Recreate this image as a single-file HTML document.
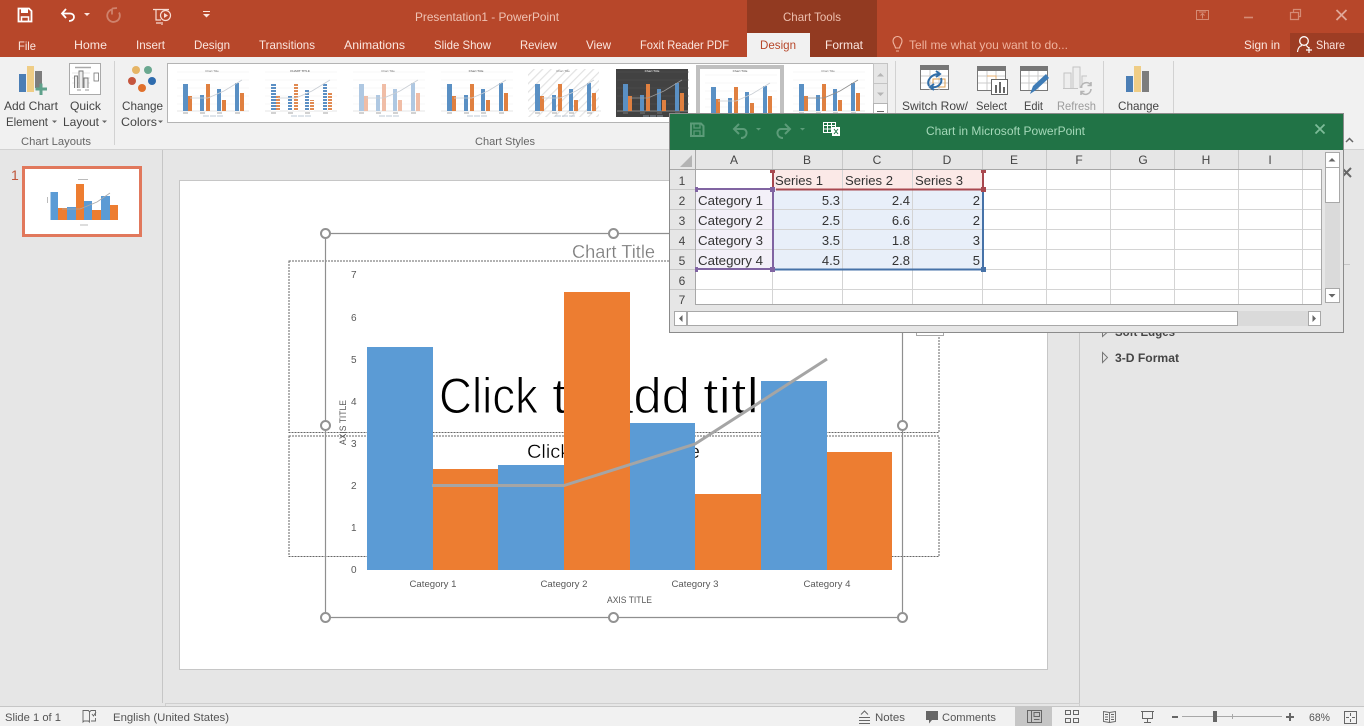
<!DOCTYPE html>
<html lang="en"><head><meta charset="utf-8"><title>Presentation1 - PowerPoint</title>
<style>
html,body{margin:0;padding:0;background:#e6e6e6;overflow:hidden}
svg{display:block;position:absolute;left:0;top:0}
text{font-family:"Liberation Sans",sans-serif;font-size:12px;fill:#444}
.tab{fill:#fbe6df;font-size:12px}
.rb{fill:#444;font-size:12px}
.gr{fill:#666;font-size:11px}
.cell{fill:#333;font-size:13px}
.hd{fill:#444;font-size:12px;text-anchor:middle}
.st{fill:#555;font-size:11px}
.ax{fill:#595959;font-size:10px}
.cat{fill:#595959;font-size:9.5px;text-anchor:middle}
.tiny{font-size:3px;fill:#777;text-anchor:middle}
.big{font-size:50px;fill:#000;stroke:#fff;stroke-width:1.1px}
.soft{filter:blur(.3px)}
</style></head><body>
<svg width="1364" height="726" viewBox="0 0 1364 726" xmlns="http://www.w3.org/2000/svg">
<defs>
<pattern id="sb" width="100" height="3" patternUnits="userSpaceOnUse"><rect width="100" height="2" fill="#5b8fc4"/><rect y="2" width="100" height="1" fill="#fff"/></pattern>
<pattern id="so" width="100" height="3" patternUnits="userSpaceOnUse"><rect width="100" height="2" fill="#e08a52"/><rect y="2" width="100" height="1" fill="#fff"/></pattern>
<pattern id="hatch" width="6" height="6" patternUnits="userSpaceOnUse" patternTransform="rotate(45)"><rect width="6" height="6" fill="#fff"/><rect width="1.2" height="6" fill="#e2e2e2"/></pattern>
<g id="th">
<path d="M-6 72H66M-6 80H66M-6 88H66M-6 96H66M-6 104H66" stroke="var(--g,#f0f0f0)" stroke-width=".6"/>
<path d="M-6 111H66" stroke="#ccc" stroke-width=".6"/>
<path d="M0 84h5v27H0zM17 95h4v16h-4zM34 89h4v22h-4zM52 83h4v28h-4z" fill="var(--b,#5a90c4)"/>
<path d="M5 96h4v15H5zM23 84h4v27h-4zM39 100h4v11h-4zM57 93h4v18h-4z" fill="var(--o,#e08040)"/>
<path d="M7 98H25L41 91 59 80" fill="none" stroke="var(--l,#c9ced4)" stroke-width=".8"/>
<path d="M0 113h5M17 113h5M34 113h5M52 113h5" stroke="#888" stroke-width=".8"/>
<path d="M20 116h6M27 116h6M34 116h6" stroke="#a9b6c7" stroke-width=".8"/>
</g>
</defs>

<!-- base -->
<rect width="1364" height="726" fill="#e6e6e6"/>
<path d="M162.500 150V703" stroke="#c6c6c6"/>
<path d="M1079.500 150V706" stroke="#c6c6c6"/>

<!-- thumbnail -->
<text x="11" y="180" style="font-size:14px;fill:#c0563a" textLength="7">1</text>
<rect x="23.500" y="167.500" width="117" height="68" fill="#fff" stroke="#e1785c" stroke-width="3"/>
<g class="soft">
<path d="M50.500 192H58V220H50.500zM67 207H76V220H67zM84 201H92V220H84zM101 196H110V220H101z" fill="#5b9bd5"/>
<path d="M58 208H67V220H58zM76 184H84V220H76zM92 210H101V220H92zM110 205H118V220H110z" fill="#ed7d31"/>
<path d="M62 209H80L97 202 110 193" fill="none" stroke="#aaa" stroke-width=".8"/>
<path d="M78 179.500h10M80 225h8M47.500 197v6" stroke="#bbb" stroke-width="1"/>
</g>

<!-- slide -->
<rect x="179.500" y="180.500" width="868" height="489" fill="#fff" stroke="#c6c6c6"/>
<rect x="165.500" y="703.500" width="914" height="3" fill="#e6e6e6" stroke="#cfcfcf"/>

<!-- placeholders -->
<rect x="289" y="261" width="650" height="171.500" fill="none" stroke="#666" stroke-dasharray="2 1"/>
<rect x="289" y="436" width="650" height="120.500" fill="none" stroke="#666" stroke-dasharray="2 1"/>
<text class="big" x="439" y="413" textLength="99" lengthAdjust="spacingAndGlyphs">Click</text>
<text class="big" x="552" y="413" textLength="46" lengthAdjust="spacingAndGlyphs">to</text>
<text class="big" x="605" y="413" textLength="85" lengthAdjust="spacingAndGlyphs">add</text>
<text class="big" x="703" y="413" textLength="56" lengthAdjust="spacingAndGlyphs">titl</text>
<text class="big" x="763" y="413" textLength="24" lengthAdjust="spacingAndGlyphs">e</text>
<text x="527" y="458" style="font-size:19px;fill:#000;stroke:#fff;stroke-width:.3px" textLength="173" lengthAdjust="spacingAndGlyphs">Click to add subtitle</text>

<!-- chart -->
<path d="M325.500 233.500H902.500V617.500H325.500Z" fill="none" stroke="#8f8f8f" stroke-width="1.200"/>
<text x="572" y="258" style="font-size:18px;fill:#7a7a7a;stroke:#fff;stroke-width:.25px" textLength="83" lengthAdjust="spacingAndGlyphs">Chart Title</text>
<g class="ax">
<text class="ax" x="351" y="278">7</text><text class="ax" x="351" y="321">6</text><text class="ax" x="351" y="363">5</text><text class="ax" x="351" y="405">4</text><text class="ax" x="351" y="447">3</text><text class="ax" x="351" y="489">2</text><text class="ax" x="351" y="531">1</text><text class="ax" x="351" y="573">0</text>
</g>
<text transform="translate(346,445) rotate(-90)" style="font-size:9.500px;fill:#595959" textLength="45" lengthAdjust="spacingAndGlyphs">AXIS TITLE</text>
<path d="M367 347H433V570H367zM498 465H564V570H498zM630 423H695V570H630zM761 381H827V570H761z" fill="#5b9bd5"/>
<path d="M433 469H498V570H433zM564 292H630V570H564zM695 494H761V570H695zM827 452H892V570H827z" fill="#ed7d31"/>
<path d="M432 485.500H564L695 444 827 359" fill="none" stroke="#a5a5a5" stroke-width="3"/>
<text class="cat" x="433" y="587" textLength="47" lengthAdjust="spacingAndGlyphs">Category 1</text>
<text class="cat" x="564" y="587" textLength="47" lengthAdjust="spacingAndGlyphs">Category 2</text>
<text class="cat" x="695" y="587" textLength="47" lengthAdjust="spacingAndGlyphs">Category 3</text>
<text class="cat" x="827" y="587" textLength="47" lengthAdjust="spacingAndGlyphs">Category 4</text>
<text x="607" y="603" style="font-size:9.500px;fill:#595959" textLength="45" lengthAdjust="spacingAndGlyphs">AXIS TITLE</text>
<g fill="#fff" stroke="#929292" stroke-width="2">
<circle cx="325.500" cy="233.500" r="4.500"/><circle cx="613.500" cy="233.500" r="4.500"/><circle cx="325.500" cy="425.500" r="4.500"/><circle cx="902.500" cy="425.500" r="4.500"/><circle cx="325.500" cy="617.500" r="4.500"/><circle cx="613.500" cy="617.500" r="4.500"/><circle cx="902.500" cy="617.500" r="4.500"/>
</g>
<rect x="916.500" y="322.500" width="27" height="13" fill="#fff" stroke="#a8a8a8"/>

<!-- right pane -->
<path d="M1344 264.500H1350" stroke="#c6c6c6"/>
<path d="M1342 168L1351 177M1351 168L1342 177" stroke="#666" stroke-width="2" fill="none"/>
<path d="M1102.500 328.500L1107 332.500 1102.500 336.500Z" fill="none" stroke="#777"/>
<path d="M1102.500 352.500L1107.500 357.500 1102.500 362.500Z" fill="none" stroke="#777"/>
<text x="1115" y="336" style="font-size:12px;font-weight:bold;fill:#444" textLength="60" lengthAdjust="spacingAndGlyphs">Soft Edges</text>
<text x="1115" y="362" style="font-size:12px;font-weight:bold;fill:#444" textLength="64" lengthAdjust="spacingAndGlyphs">3-D Format</text>

<!-- ribbon -->
<rect y="57" width="1364" height="92" fill="#f1f1f1"/>
<path d="M0 149.500H1364" stroke="#d2d2d2"/>
<rect width="1364" height="57" fill="#b7472a"/>
<rect x="747" width="130" height="57" fill="#923a21"/>
<rect x="747" y="33" width="63" height="24" fill="#f1f1f1"/>
<rect x="1290" y="33" width="74" height="24" fill="#9d3d24"/>

<!-- QAT -->
<path d="M18.500 8.500H29L31.500 11V21.500H18.500Z" fill="none" stroke="#fff" stroke-width="1.800"/>
<path d="M21 8v5h7V8" fill="#fff"/><path d="M21.500 21.500v-4.500h7v4.500" fill="none" stroke="#fff" stroke-width="1.500"/>
<path d="M66 9L62 13.500 66 18M63 13.500H70C75.500 13.500 75.500 21 69 21" fill="none" stroke="#fff" stroke-width="1.800"/>
<path d="M84 13h6l-3 3z" fill="#fbe6df"/>
<path d="M112 9.500A6.300 6.300 0 1 0 119 12.500M112 8.500v6M117 8L112 8.500" fill="none" stroke="#cf826c" stroke-width="1.800"/>
<path d="M153 9.500H169M156 10V20H161M161 23H156M162 22V25" fill="none" stroke="#f7dcd3" stroke-width="1.200"/>
<circle cx="165.500" cy="15.500" r="5" fill="none" stroke="#f7dcd3" stroke-width="1.200"/><path d="M164 13L168 15.500 164 18Z" fill="#f7dcd3"/>
<path d="M203 14h7l-3.500 3.500z" fill="#fbe6df" stroke="none"/><path d="M203 11.500H210" stroke="#fbe6df"/>

<!-- title + window controls -->
<text x="415" y="21" style="font-size:12px;fill:#efc3b4" textLength="144" lengthAdjust="spacingAndGlyphs">Presentation1 - PowerPoint</text>
<text x="783" y="21" style="font-size:12px;fill:#edbfae" textLength="58" lengthAdjust="spacingAndGlyphs">Chart Tools</text>
<rect x="1196.500" y="10.500" width="12" height="9" fill="none" stroke="#d58b75"/><path d="M1199 12h7M1202.500 18.500v-5M1200.500 15.500l2-2 2 2" fill="none" stroke="#d58b75"/>
<path d="M1244 17.500H1253" stroke="#d58b75" stroke-width="1.600"/>
<path d="M1290.500 12.500H1298.500V19.500H1290.500ZM1293.500 12V9.500H1300.500V16.500H1298.500" fill="none" stroke="#d58b75" stroke-width="1.200"/>
<path d="M1336.500 10L1346.500 20M1346.500 10L1336.500 20" stroke="#e0a898" stroke-width="1.800"/>

<!-- tabs -->
<text class="tab" x="18" y="50" textLength="18" lengthAdjust="spacingAndGlyphs">File</text>
<text class="tab" x="74" y="49" textLength="33" lengthAdjust="spacingAndGlyphs">Home</text>
<text class="tab" x="136" y="49" textLength="29" lengthAdjust="spacingAndGlyphs">Insert</text>
<text class="tab" x="194" y="49" textLength="36" lengthAdjust="spacingAndGlyphs">Design</text>
<text class="tab" x="259" y="49" textLength="56" lengthAdjust="spacingAndGlyphs">Transitions</text>
<text class="tab" x="344" y="49" textLength="61" lengthAdjust="spacingAndGlyphs">Animations</text>
<text class="tab" x="434" y="49" textLength="57" lengthAdjust="spacingAndGlyphs">Slide Show</text>
<text class="tab" x="520" y="49" textLength="37" lengthAdjust="spacingAndGlyphs">Review</text>
<text class="tab" x="586" y="49" textLength="25" lengthAdjust="spacingAndGlyphs">View</text>
<text class="tab" x="640" y="49" textLength="89" lengthAdjust="spacingAndGlyphs">Foxit Reader PDF</text>
<text x="760" y="49" style="font-size:12px;fill:#b7472a" textLength="36" lengthAdjust="spacingAndGlyphs">Design</text>
<text class="tab" x="825" y="49" textLength="38" lengthAdjust="spacingAndGlyphs">Format</text>
<path d="M895.500 48C895 45 893 44 893 41A4.500 4.500 0 1 1 902 41C902 44 900 45 899.500 48ZM896 51H899" fill="none" stroke="#f0b7a3" stroke-width="1.100"/>
<text x="909" y="49" style="font-size:12px;fill:#efb29d" textLength="159" lengthAdjust="spacingAndGlyphs">Tell me what you want to do...</text>
<text class="tab" x="1244" y="49" textLength="36" lengthAdjust="spacingAndGlyphs">Sign in</text>
<circle cx="1304" cy="41" r="4.300" fill="none" stroke="#fff" stroke-width="1.300"/><path d="M1297.500 52C1298 47 1300 46 1302 45.500M1306 45.500C1307 46 1308 47 1308.500 48M1306 50H1312M1309 47V53" fill="none" stroke="#fff" stroke-width="1.200"/>
<text class="tab" x="1316" y="49" textLength="29" lengthAdjust="spacingAndGlyphs">Share</text>

<!-- Add chart element -->
<rect x="19" y="74" width="7" height="18" fill="#4b7eb5"/><rect x="27" y="66" width="7" height="26" fill="#efcd86"/><rect x="35" y="71" width="7" height="17" fill="#7d7d7d"/>
<path d="M41 83.500V95M35.500 89H47" stroke="#5fa18b" stroke-width="3"/>
<!-- Quick layout -->
<rect x="69.500" y="63.500" width="31" height="31" fill="#fff" stroke="#aaa"/>
<path d="M75 67.500H91" stroke="#aaa" stroke-width="1.500"/><path d="M72 73H90M72 78H90M72 83H90" stroke="#ddd" stroke-width=".8"/>
<path d="M74.500 88V76H77.500V88M79 88V71H83V88M84 88V78H88V88" fill="#eee" stroke="#777" stroke-width=".9"/>
<rect x="94" y="73" width="4.500" height="8" fill="#fff" stroke="#777" stroke-width=".8"/>
<path d="M77 90H81M85 90H89" stroke="#999"/>
<!-- Colors -->
<circle cx="136" cy="70" r="4" fill="#e6b566"/><circle cx="148" cy="70" r="4" fill="#6aa890"/><circle cx="132" cy="81" r="4" fill="#c5563e"/><circle cx="152" cy="81" r="4" fill="#2f6cae"/><circle cx="142" cy="88" r="4" fill="#e0702c"/>

<g class="rb">
<text class="rb" x="4" y="110" textLength="54" lengthAdjust="spacingAndGlyphs">Add Chart</text>
<text class="rb" x="6" y="126" textLength="42" lengthAdjust="spacingAndGlyphs">Element</text>
<text class="rb" x="70" y="110" textLength="31" lengthAdjust="spacingAndGlyphs">Quick</text>
<text class="rb" x="63" y="126" textLength="36" lengthAdjust="spacingAndGlyphs">Layout</text>
<text class="rb" x="122" y="110" textLength="41" lengthAdjust="spacingAndGlyphs">Change</text>
<text class="rb" x="121" y="126" textLength="36" lengthAdjust="spacingAndGlyphs">Colors</text>
<text class="rb" x="902" y="110" textLength="66" lengthAdjust="spacingAndGlyphs">Switch Row/</text>
<text class="rb" x="976" y="110" textLength="31" lengthAdjust="spacingAndGlyphs">Select</text>
<text class="rb" x="1024" y="110" textLength="19" lengthAdjust="spacingAndGlyphs">Edit</text>
<text x="1057" y="110" style="font-size:12px;fill:#9c9c9c" textLength="39" lengthAdjust="spacingAndGlyphs">Refresh</text>
<text class="rb" x="1118" y="110" textLength="41" lengthAdjust="spacingAndGlyphs">Change</text>
</g>
<path d="M52 120.500h5l-2.500 2.500zM102 120.500h5l-2.500 2.500zM158 120.500h5l-2.500 2.500z" fill="#666"/>
<text class="gr" x="21" y="145" textLength="70" lengthAdjust="spacingAndGlyphs">Chart Layouts</text>
<text class="gr" x="475" y="145" textLength="60" lengthAdjust="spacingAndGlyphs">Chart Styles</text>
<path d="M114.500 61V145M895.500 61V145M1103.500 61V145M1173.500 61V145" stroke="#d2d2d2"/>

<!-- gallery -->
<rect x="167.500" y="63.500" width="720" height="59" fill="#fff" stroke="#b4b4b4"/>
<rect x="873.500" y="63.500" width="14" height="20" fill="#e6e6e6" stroke="#c4c4c4"/>
<rect x="873.500" y="83.500" width="14" height="20" fill="#e6e6e6" stroke="#c4c4c4"/>
<rect x="873.500" y="103.500" width="14" height="19" fill="#fff" stroke="#b4b4b4"/>
<path d="M877 76.500h7l-3.500-3.500zM877 92.500h7l-3.500 3.500z" fill="#b5b5b5"/>
<path d="M877 111.500h7" stroke="#666"/>
<rect x="528" y="69" width="71" height="48" fill="url(#hatch)"/>
<rect x="616" y="69" width="72" height="48" fill="#424242"/>
<rect x="698" y="67" width="84" height="60" fill="#fff" stroke="#c0c0c0" stroke-width="4"/>
<rect x="166" y="122.500" width="722" height="6" fill="#f1f1f1"/>
<path d="M167 122.500H888" stroke="#b4b4b4"/>
<path d="M696 122.500H784" stroke="#c0c0c0"/>
<g class="soft">
<use href="#th" x="183"/><use href="#th" x="271" style="--b:url(#sb);--o:url(#so)"/>
<use href="#th" x="359" style="--b:#afc8e2;--o:#f0bda6"/><use href="#th" x="447"/>
<use href="#th" x="535" style="--g:none"/><use href="#th" x="623" style="--g:#555;--l:#999"/>
<use href="#th" x="711" y="3"/><use href="#th" x="799" style="--l:#8f8f8f"/>
</g>
<text class="tiny" x="212" y="72">Chart Title</text><text class="tiny" x="300" y="72" style="font-weight:bold">CHART TITLE</text><text class="tiny" x="388" y="72">Chart Title</text><text class="tiny" x="476" y="72" style="font-weight:bold">Chart Title</text><text class="tiny" x="563" y="72">Chart Title</text><text class="tiny" x="652" y="72" style="fill:#ddd;font-weight:bold">Chart Title</text><text class="tiny" x="740" y="72" style="font-weight:bold">Chart Title</text><text class="tiny" x="828" y="72">Chart Title</text>

<!-- data tool icons -->
<rect x="920.500" y="65.500" width="28" height="24" fill="#fff" stroke="#777"/><rect x="920" y="65" width="29" height="5" fill="#777"/>
<path d="M921 76H948M921 83H948M930 70V90M939 70V90" stroke="#ccc"/>
<path d="M933 79H945V87H933Z" fill="none" stroke="#e0a050"/>
<path d="M929 86C926 80 932 74 939 74M936 71L940 74 936 77" fill="none" stroke="#2f6da8" stroke-width="2"/>
<path d="M941 78C943 84 937 88 932 87M934 84L930 87 934 90" fill="none" stroke="#2f6da8" stroke-width="2"/>
<rect x="977.500" y="66.500" width="28" height="24" fill="#fff" stroke="#777"/><rect x="977" y="66" width="29" height="5" fill="#777"/>
<path d="M978 76H1005M978 83H1005M987 71V90M996 71V90" stroke="#ccc"/><path d="M987 76H996V85" fill="none" stroke="#e8b070"/>
<rect x="991.500" y="79.500" width="16" height="15" fill="#fff" stroke="#666"/><path d="M995 93V85H997V93M999 93V82H1001V93M1003 93V87H1005V93" fill="#666" stroke="none"/>
<rect x="1020.500" y="66.500" width="27" height="24" fill="#fff" stroke="#777"/><rect x="1020" y="66" width="28" height="5" fill="#777"/>
<path d="M1021 76H1047M1021 83H1047M1029 71V90M1038 71V90" stroke="#ccc"/>
<path d="M1030 94L1033 86 1046 74 1049 78 1036 90Z" fill="#3f7cb6"/>
<path d="M1064 88V73H1071V88M1073 88V67H1080V88M1082 88V76H1087" fill="#eee" stroke="#c4c4c4"/><path d="M1063 88.500H1078" stroke="#c4c4c4"/>
<path d="M1081 88A5.500 5.500 0 0 1 1091 85M1091 89A5.500 5.500 0 0 1 1081 92M1091 82V85.500H1087.500M1081 95V91.500H1084.500" fill="none" stroke="#b5b5b5" stroke-width="1.600"/>
<rect x="1126" y="76" width="7" height="16" fill="#4b7eb5"/><rect x="1134" y="66" width="7" height="26" fill="#efcd86"/><rect x="1142" y="71" width="7" height="21" fill="#7d7d7d"/>
<path d="M1346 142L1349.500 138.500 1353 142" fill="none" stroke="#666" stroke-width="1.500"/>

<!-- excel window -->
<rect x="669.500" y="113.500" width="674" height="219" fill="#e6e6e6" stroke="#8b8b8b"/>
<rect x="670" y="114" width="673" height="36" fill="#217346"/>
<path d="M691 123.500H701L703.500 126V136H691Z" fill="none" stroke="#5c9c79" stroke-width="2"/><path d="M694 123v5h6v-5M694 136v-5h6v5" fill="none" stroke="#5c9c79" stroke-width="1.300"/>
<path d="M739 124L734 129 739 134M735 129H743C748 129 748 138 741 138" fill="none" stroke="#5c9c79" stroke-width="2"/>
<path d="M756 128h5l-2.500 2.500zM800 128h5l-2.500 2.500z" fill="#5c9c79"/>
<path d="M785 124L790 129 785 134M789 129H781C776 129 776 138 783 138" fill="none" stroke="#5c9c79" stroke-width="2"/>
<path d="M823.500 122.500H835.500V132.500H823.500ZM823.500 125.500H835.500M823.500 129H835.500M827.500 122.500V132.500M831.500 122.500V132.500" fill="none" stroke="#fff"/>
<rect x="832" y="127" width="8" height="9" fill="#fff"/><path d="M834 129L838 134M838 129L834 134" stroke="#217346"/>
<text x="926" y="135" style="font-size:12px;fill:#a5d8b9" textLength="159" lengthAdjust="spacingAndGlyphs">Chart in Microsoft PowerPoint</text>
<path d="M1315.500 124.500L1324.500 133.500M1324.500 124.500L1315.500 133.500" stroke="#7dbb98" stroke-width="1.800"/>

<!-- sheet -->
<rect x="695" y="169" width="627" height="135" fill="#fff"/>
<rect x="773" y="170" width="210" height="19" fill="#fbe9e7"/>
<rect x="773" y="190" width="210" height="79" fill="#e8eff9"/>
<rect x="696" y="190" width="76" height="79" fill="#f3f0f8"/>
<path d="M696 189.500H1322M696 209.500H1322M696 229.500H1322M696 249.500H1322M696 269.500H1322M696 289.500H1322" stroke="#d4d4d4"/>
<path d="M772.500 169V304M842.500 169V304M912.500 169V304M982.500 169V304M1046.500 169V304M1110.500 169V304M1174.500 169V304M1238.500 169V304M1302.500 169V304" stroke="#d4d4d4"/>
<path d="M695.500 150V304.500H1321.500V169M670 169.500H1322" fill="none" stroke="#a8a8a8"/>
<path d="M772.500 150V169M842.500 150V169M912.500 150V169M982.500 150V169M1046.500 150V169M1110.500 150V169M1174.500 150V169M1238.500 150V169M1302.500 150V169" stroke="#c8c8c8"/>
<path d="M670 189.500H695M670 209.500H695M670 229.500H695M670 249.500H695M670 269.500H695M670 289.500H695" stroke="#c8c8c8"/>
<path d="M692 155V167H680Z" fill="#b4b4b4"/>
<text class="hd" x="734" y="164">A</text><text class="hd" x="807" y="164">B</text><text class="hd" x="877" y="164">C</text><text class="hd" x="947" y="164">D</text><text class="hd" x="1014" y="164">E</text><text class="hd" x="1079" y="164">F</text><text class="hd" x="1143" y="164">G</text><text class="hd" x="1206" y="164">H</text><text class="hd" x="1270" y="164">I</text>
<text class="hd" x="682" y="185">1</text><text class="hd" x="682" y="205">2</text><text class="hd" x="682" y="225">3</text><text class="hd" x="682" y="245">4</text><text class="hd" x="682" y="265">5</text><text class="hd" x="682" y="285">6</text><text class="hd" x="682" y="304">7</text>

<path d="M697 189H773V269H697" fill="none" stroke="#8064a2" stroke-width="2"/>
<path d="M775 269.500H982M983 191V268" fill="none" stroke="#4672a8" stroke-width="2"/>
<path d="M773 172V188M776 189.500H981M983 172V188" fill="none" stroke="#a8484f" stroke-width="2"/>
<rect x="770" y="170" width="5" height="3" fill="#a8484f"/><rect x="981" y="170" width="5" height="3" fill="#a8484f"/><rect x="981" y="187" width="5" height="5" fill="#a8484f"/>
<rect x="770" y="187" width="5" height="5" fill="#8064a2"/><rect x="695" y="187" width="3" height="5" fill="#8064a2"/><rect x="695" y="267" width="3" height="5" fill="#8064a2"/><rect x="770" y="267" width="5" height="5" fill="#8064a2"/>
<rect x="981" y="267" width="5" height="5" fill="#4672a8"/>

<text class="cell" x="775" y="185" textLength="48" lengthAdjust="spacingAndGlyphs">Series 1</text>
<text class="cell" x="845" y="185" textLength="48" lengthAdjust="spacingAndGlyphs">Series 2</text>
<text class="cell" x="915" y="185" textLength="48" lengthAdjust="spacingAndGlyphs">Series 3</text>
<text class="cell" x="698" y="205" textLength="65" lengthAdjust="spacingAndGlyphs">Category 1</text>
<text class="cell" x="698" y="225" textLength="65" lengthAdjust="spacingAndGlyphs">Category 2</text>
<text class="cell" x="698" y="245" textLength="65" lengthAdjust="spacingAndGlyphs">Category 3</text>
<text class="cell" x="698" y="265" textLength="65" lengthAdjust="spacingAndGlyphs">Category 4</text>
<g text-anchor="end">
<text class="cell" x="840" y="205">5.3</text><text class="cell" x="910" y="205">2.4</text><text class="cell" x="980" y="205">2</text>
<text class="cell" x="840" y="225">2.5</text><text class="cell" x="910" y="225">6.6</text><text class="cell" x="980" y="225">2</text>
<text class="cell" x="840" y="245">3.5</text><text class="cell" x="910" y="245">1.8</text><text class="cell" x="980" y="245">3</text>
<text class="cell" x="840" y="265">4.5</text><text class="cell" x="910" y="265">2.8</text><text class="cell" x="980" y="265">5</text>
</g>

<!-- excel scrollbars -->
<rect x="1325" y="152" width="15" height="151" fill="#dadada"/>
<rect x="1325.500" y="152.500" width="14" height="15" fill="#fff" stroke="#a8a8a8"/>
<rect x="1325.500" y="167.500" width="14" height="35" fill="#fff" stroke="#a8a8a8"/>
<rect x="1325.500" y="288.500" width="14" height="14" fill="#fff" stroke="#a8a8a8"/>
<path d="M1328.500 161.500h7l-3.500-3.500zM1328.500 294h7l-3.500 3.500z" fill="#666"/>
<rect x="674" y="311" width="647" height="15" fill="#dadada"/>
<rect x="674.500" y="311.500" width="12" height="14" fill="#fff" stroke="#a8a8a8"/>
<rect x="687.500" y="311.500" width="550" height="14" fill="#fff" stroke="#a8a8a8"/>
<rect x="1308.500" y="311.500" width="12" height="14" fill="#fff" stroke="#a8a8a8"/>
<path d="M682.500 315v7l-3.500-3.500zM1312.500 315v7l3.500-3.500z" fill="#666"/>

<!-- status bar -->
<rect y="706" width="1364" height="20" fill="#f1f1f1"/>
<path d="M0 706.500H1364" stroke="#c6c6c6"/>
<text class="st" x="5" y="721" textLength="56" lengthAdjust="spacingAndGlyphs">Slide 1 of 1</text>
<path d="M83 710.500H88.500L89.500 712V722L88.500 721H84L83 722ZM89.500 712L91 710.500H95.500V716M92 714L93.500 716 96 712M91 721H95.500V718" fill="none" stroke="#666" stroke-width=".9"/>
<text class="st" x="113" y="721" textLength="116" lengthAdjust="spacingAndGlyphs">English (United States)</text>
<path d="M859 717.500H870M859 720.500H870M859 723.500H870M861 714.500L864.500 711 868 714.500" fill="none" stroke="#666"/>
<text class="st" x="875" y="721" textLength="30" lengthAdjust="spacingAndGlyphs">Notes</text>
<path d="M926 711H938V720H932L929 723.500V720H926Z" fill="#666"/>
<text class="st" x="942" y="721" textLength="54" lengthAdjust="spacingAndGlyphs">Comments</text>
<rect x="1015" y="707" width="37" height="19" fill="#c6c6c6"/>
<path d="M1027.500 710.500H1041.500V722.500H1027.500ZM1031.500 710.500V722.500M1034 712.500H1039.500V716.500H1034ZM1034 719.500H1039.500" fill="none" stroke="#666"/>
<path d="M1065.500 710.500H1070.500V714.500H1065.500ZM1073.500 710.500H1078.500V714.500H1073.500ZM1065.500 718.500H1070.500V722.500H1065.500ZM1073.500 718.500H1078.500V722.500H1073.500Z" fill="none" stroke="#666"/>
<path d="M1103.500 711.500L1109.500 712.500 1115.500 711.500V721.500L1109.500 722.500 1103.500 721.500ZM1109.500 712.500V722.500M1105 714.500H1108M1105 717H1108M1105 719.500H1108M1111 714.500H1114M1111 717H1114M1111 719.500H1114" fill="none" stroke="#666" stroke-width=".9"/>
<path d="M1141 711.500H1154M1142.500 711.500V718.500H1152.500V711.500M1147.500 718.500V722M1144 722.500H1151" fill="none" stroke="#666"/>
<path d="M1172 717H1178" stroke="#666" stroke-width="2"/>
<path d="M1182 716.500H1282" stroke="#a8a8a8"/><path d="M1232.500 714V719" stroke="#a8a8a8"/>
<rect x="1213" y="711" width="4" height="11" fill="#666"/>
<path d="M1286 717H1294M1290 713V721" stroke="#666" stroke-width="2"/>
<text class="st" x="1309" y="721" textLength="21" lengthAdjust="spacingAndGlyphs">68%</text>
<rect x="1344.500" y="711.500" width="12" height="12" fill="none" stroke="#666"/>
<path d="M1350.500 713V716M1350.500 719V722M1346 717.500H1349M1352 717.500H1355" stroke="#666"/>
</svg>
</body></html>
